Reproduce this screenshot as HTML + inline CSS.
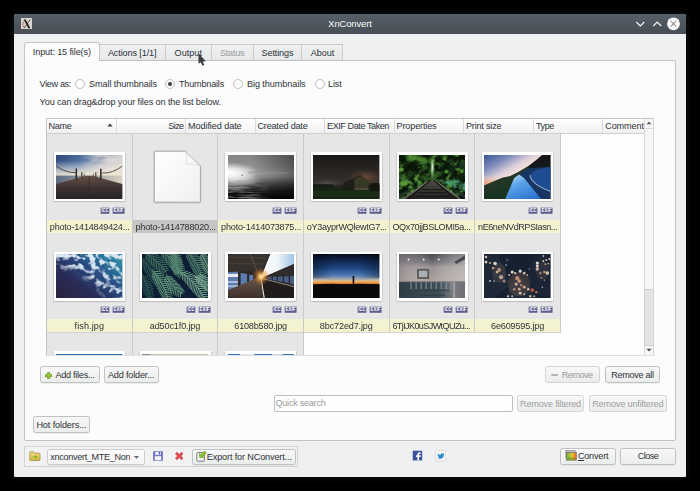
<!DOCTYPE html>
<html><head><meta charset="utf-8"><title>XnConvert</title>
<style>
html,body{margin:0;padding:0;background:#000;}
body{width:700px;height:491px;position:relative;overflow:hidden;font-family:"Liberation Sans",sans-serif;font-size:9.1px;color:#2f3338;letter-spacing:-0.08px;}
div,svg{position:absolute;box-sizing:border-box;}
.abs{position:absolute;}
#glow{left:4px;top:6px;width:692px;height:481px;border-radius:10px;background:#0c0c0c;filter:blur(5px);}
#win{left:14px;top:14px;width:672px;height:463px;background:#eff0f1;border-radius:3px 3px 1px 1px;box-shadow:0 0 7px rgba(70,80,90,0.28);}
#tb{left:14px;top:14px;width:672px;height:20px;border-radius:3px 3px 0 0;background:linear-gradient(#566068,#474e55);}
#ttl{left:14px;top:14px;width:672px;height:20px;line-height:20px;text-align:center;color:#fcfcfc;font-size:9.4px;}
#panel{left:24px;top:60px;width:652px;height:381px;background:#fcfcfc;border:1px solid #c0c2c4;border-radius:0 2px 2px 2px;}
.tab{top:43.6px;height:17.4px;line-height:16.6px;text-align:center;background:linear-gradient(#eff0f1,#e7e8e9);border:1px solid #c8cacc;border-bottom-color:#bfc1c3;border-left:none;white-space:nowrap;}
.tab.first{top:41.6px;height:19.4px;line-height:18.6px;background:#fcfcfc;border:1px solid #c2c4c6;border-bottom:none;border-radius:3px 3px 0 0;}
.tab.dis{color:#9a9c9e;}
.t{white-space:nowrap;line-height:12px;height:12px;}
.rd{width:10px;height:10px;border-radius:50%;border:1px solid #bdbfc1;background:#fcfcfc;}
.rd.on::after{content:"";position:absolute;left:2px;top:2px;width:4px;height:4px;border-radius:50%;background:#3a3e43;}
#tbl{left:46px;top:118px;width:608px;height:237.6px;background:#fdfdfd;border:1px solid #c3c4c6;border-bottom-color:#dfe0e1;border-right-color:#d4d5d6;}
#hdr{left:46.5px;top:119px;width:598px;height:14.5px;background:linear-gradient(#ffffff,#f0f0f0);border-bottom:1px solid #cfcfcf;}
.th{top:119px;height:14px;line-height:14px;border-right:1px solid #dadada;white-space:nowrap;overflow:hidden;}
.th span{padding:0 1.5px 0 2px;}
.cell{background:#e6e6e6;border-right:1px solid #cbcbcb;border-bottom:1px solid #d2d2d2;}
.fr{width:71px;height:48.8px;background:#fff;box-shadow:0 0.5px 1.5px rgba(0,0,0,.45);padding:2.3px;overflow:hidden;}
.fr svg{position:static;display:block;width:66.4px;height:44.2px;}
.bd{height:6.6px;line-height:6.6px;font-size:4.8px;font-weight:bold;color:#fff;background:#5e5e8c;text-align:center;letter-spacing:-0.15px;overflow:hidden;box-shadow:0 0 0 0.6px #f2f2f6;}
.lb{height:13.2px;line-height:13.2px;padding-top:1.1px;background:#f4f3d0;white-space:nowrap;overflow:hidden;padding-left:2.8px;}
.lb.ctr{text-align:center;padding-left:0;}
.lb.sel{background:#c5c5c5;}
.btn{height:17px;line-height:16.6px;text-align:center;border:1px solid #bfc1c3;border-radius:2.5px;background:linear-gradient(#f8f8f8,#ebecec);white-space:nowrap;box-shadow:0 0.5px 0.5px rgba(0,0,0,.12);}
.btn.dis{color:#9c9ea0;border-color:#d3d4d5;box-shadow:none;}
</style></head><body>
<svg width="0" height="0" style="left:0;top:0"><defs><filter id="bl" x="-5%" y="-5%" width="110%" height="110%" color-interpolation-filters="sRGB"><feGaussianBlur stdDeviation="0.45"/></filter></defs></svg>
<div id="win"></div>
<div id="tb"></div>
<div id="ttl">XnConvert</div>
<!-- window icon -->
<svg style="left:20.5px;top:17.6px" width="11.6" height="11.8" viewBox="0 0 11.6 11.8"><rect width="11.6" height="11.8" fill="#d8d6d0"/><path d="M2.6 1.6 L4.6 1.6 L9.4 10.2 L7.4 10.2 Z" fill="#1e1e1e"/><path d="M9.2 1.6 L3 10.2" stroke="#2a2a2a" stroke-width="0.8" fill="none"/><path d="M2.6 3.4 Q0.8 7 3 9.8" stroke="#c8553f" stroke-width="0.8" fill="none"/></svg>
<!-- title buttons -->
<svg style="left:634px;top:16px" width="50" height="16" viewBox="0 0 50 16">
<path d="M2.3 6 L6.3 10 L10.3 6" stroke="#fcfcfc" stroke-width="1.1" fill="none"/>
<path d="M19.2 10 L23.2 6 L27.2 6.0 M23.2 6 L27.2 10" stroke="none" fill="none"/>
<path d="M19.2 10 L23.2 6 L27.2 10" stroke="#fcfcfc" stroke-width="1.1" fill="none"/>
<circle cx="39.5" cy="7.8" r="6.4" fill="#fcfcfc"/>
<path d="M36.7 5 L42.3 10.6 M42.3 5 L36.7 10.6" stroke="#4a5259" stroke-width="0.9" fill="none"/>
</svg>

<div id="panel"></div>
<div class="tab first" style="left:24px;width:75.6px"><span style="letter-spacing:-0.127px">Input: 15 file(s)</span></div>
<div class="tab" style="left:99.6px;width:66.2px"><span style="letter-spacing:-0.111px">Actions [1/1]</span></div>
<div class="tab" style="left:165.8px;width:46px"><span style="letter-spacing:0.015px">Output</span></div>
<div class="tab dis" style="left:211.8px;width:41.8px"><span style="letter-spacing:-0.23px">Status</span></div>
<div class="tab" style="left:253.6px;width:48.8px"><span style="letter-spacing:-0.132px">Settings</span></div>
<div class="tab" style="left:302.4px;width:41px"><span style="letter-spacing:-0.073px">About</span></div>
<!-- cursor -->
<svg style="left:196px;top:50px" width="12" height="18" viewBox="196 50 12 18"><path d="M198.5 53.2 L198.5 63.8 L200.7 62.3 L202.5 65.8 L204.3 64.9 L202.7 61.6 L205.8 61.2 Z" fill="#3a3e42"/></svg>

<div class="t" style="left:39.6px;top:78px"><span style="letter-spacing:-0.352px">View as:</span></div>
<div class="rd" style="left:75px;top:78.6px"></div>
<div class="t" style="left:89px;top:78px"><span style="letter-spacing:-0.078px">Small thumbnails</span></div>
<div class="rd on" style="left:165px;top:78.6px"></div>
<div class="t" style="left:179px;top:78px"><span style="letter-spacing:-0.202px">Thumbnails</span></div>
<div class="rd" style="left:233px;top:78.6px"></div>
<div class="t" style="left:247px;top:78px"><span style="letter-spacing:-0.075px">Big thumbnails</span></div>
<div class="rd" style="left:314.5px;top:78.6px"></div>
<div class="t" style="left:328px;top:78px"><span style="letter-spacing:-0.164px">List</span></div>
<div class="t" style="left:39.6px;top:95.5px"><span style="letter-spacing:-0.103px">You can drag&amp;drop your files on the list below.</span></div>

<div id="tbl"></div>
<div id="hdr"></div>
<div class="th" style="left:46.5px;width:70.0px;"><span style="letter-spacing:-0.316px">Name</span></div><div class="th" style="left:116.5px;width:69.5px;text-align:right;"><span style="letter-spacing:-0.62px">Size</span></div><div class="th" style="left:186px;width:69.5px;"><span style="letter-spacing:-0.078px">Modified date</span></div><div class="th" style="left:255.5px;width:69.5px;"><span style="letter-spacing:-0.215px">Created date</span></div><div class="th" style="left:325px;width:69.5px;"><span style="letter-spacing:-0.439px">EXIF Date Taken</span></div><div class="th" style="left:394.5px;width:69.5px;"><span style="letter-spacing:-0.145px">Properties</span></div><div class="th" style="left:464px;width:70px;"><span style="letter-spacing:-0.201px">Print size</span></div><div class="th" style="left:534px;width:69.20000000000005px;"><span style="letter-spacing:-0.48px">Type</span></div><div class="th" style="left:603.2px;width:42.299999999999955px;"><span style="letter-spacing:-0.117px">Comment</span></div>
<svg style="left:107px;top:123.4px" width="6" height="4" viewBox="0 0 6 4"><path d="M0.4 3.4 L3 0.6 L5.6 3.4 Z" fill="#3a3e43"/></svg>
<div id="grid" style="left:0;top:0;width:700px;height:355px;overflow:hidden;clip-path:inset(133.5px 55.5px 0 46.5px)">
<div style="left:46.5px;top:133.5px;width:514px;height:199.5px;background:#cdcdcd"></div>
<div style="left:46.5px;top:332.5px;width:257px;height:24px;background:#cdcdcd"></div>
<div class="cell" style="left:47.00px;top:133.50px;width:85.65px;height:99.50px"></div><div class="fr" style="left:54.0px;top:152.4px"><svg viewBox="0 0 66 44" preserveAspectRatio="none">
<defs>
<linearGradient id="a1" x1="0" y1="0" x2="1" y2="0.35"><stop offset="0" stop-color="#2b4577"/><stop offset="0.45" stop-color="#5878a6"/><stop offset="0.75" stop-color="#b9bcc4"/><stop offset="1" stop-color="#d8d2c8"/></linearGradient>
<linearGradient id="a2" x1="0" y1="0" x2="0" y2="1"><stop offset="0" stop-color="#fff" stop-opacity="0"/><stop offset="0.75" stop-color="#f1e9d8" stop-opacity="0.75"/><stop offset="1" stop-color="#efe6d2" stop-opacity="0.95"/></linearGradient>
<linearGradient id="a3" x1="0" y1="0" x2="1" y2="0"><stop offset="0" stop-color="#5c6a80"/><stop offset="0.5" stop-color="#9a9ca2"/><stop offset="1" stop-color="#d9d2c0"/></linearGradient>
<filter id="an" x="0" y="0" width="100%" height="100%" color-interpolation-filters="sRGB"><feTurbulence type="fractalNoise" baseFrequency="0.06 0.22" numOctaves="3" seed="3"/><feColorMatrix type="matrix" values="0 0 0 0 0.86  0 0 0 0 0.84  0 0 0 0 0.84  3.4 0 0 0 -1.2"/></filter>
<linearGradient id="a5" gradientUnits="userSpaceOnUse" x1="22" y1="0" x2="50" y2="0"><stop offset="0" stop-color="#000"/><stop offset="1" stop-color="#fff"/></linearGradient>
<linearGradient id="a6" x1="0" y1="0" x2="0" y2="1"><stop offset="0.3" stop-color="#fff"/><stop offset="0.7" stop-color="#000"/></linearGradient>
<mask id="ak"><rect width="66" height="20" fill="url(#a5)"/><rect width="66" height="20" fill="url(#a6)" style="mix-blend-mode:multiply"/></mask>
<linearGradient id="a4" x1="0" y1="0" x2="0" y2="1"><stop offset="0" stop-color="#655249"/><stop offset="0.35" stop-color="#493b37"/><stop offset="1" stop-color="#282325"/></linearGradient>
</defs><g filter="url(#bl)">
<rect width="66" height="21" fill="url(#a1)"/>
<rect y="6" width="66" height="15" fill="url(#a2)"/>
<g mask="url(#ak)"><rect width="66" height="20" filter="url(#an)"/></g>
<rect y="20.5" width="66" height="10" fill="url(#a3)"/>
<path d="M0 29 L30 20.6 H36 L66 29 V44 H0 Z" fill="url(#a4)"/>
<path d="M0 33.5 H66 M0 37 H66 M0 40.5 H66" stroke="#241f22" stroke-width="0.5" opacity="0.7"/>
<path d="M33 21 V44" stroke="#2a2325" stroke-width="0.5"/>
<path d="M0 11 Q10 18 19.6 17.5 M66 11 Q56 18.5 46 18" stroke="#3a3030" stroke-width="0.8" fill="none"/>
<path d="M20.2 13.5 V24.5 M44.6 13.8 V24.2" stroke="#2a2424" stroke-width="1.5"/>
<path d="M25.6 17 V22.6 M39.6 17 V22.4" stroke="#2f2828" stroke-width="1"/>
<path d="M28 18.5 V21.6 M37.2 18.5 V21.6" stroke="#3a3232" stroke-width="0.7"/>
</g></svg></div><svg class="abs" style="left:100.2px;top:206.7px" width="10.0" height="7.4" viewBox="0 0 10.0 7.4"><rect x="0" y="0" width="10.0" height="7.4" fill="#f1f1f5"/><rect x="0.6" y="0.6" width="8.8" height="6.2" fill="#5e5e8c"/><text x="5.0" y="5.5" text-anchor="middle" textLength="7.2" lengthAdjust="spacingAndGlyphs" font-family="Liberation Sans, sans-serif" font-weight="bold" font-size="5" fill="#fff">ICC</text></svg><svg class="abs" style="left:112.2px;top:206.7px" width="13.2" height="7.4" viewBox="0 0 13.2 7.4"><rect x="0" y="0" width="13.2" height="7.4" fill="#f1f1f5"/><rect x="0.6" y="0.6" width="12" height="6.2" fill="#5e5e8c"/><text x="6.6" y="5.5" text-anchor="middle" textLength="10" lengthAdjust="spacingAndGlyphs" font-family="Liberation Sans, sans-serif" font-weight="bold" font-size="5" fill="#fff">EXIF</text></svg><div class="lb" style="left:47.00px;top:219.8px;width:84.65px;letter-spacing:-0.219px">photo-1414849424...</div><div class="cell" style="left:132.65px;top:133.50px;width:85.65px;height:99.50px"></div><svg class="abs" style="left:153.2px;top:150.3px" width="49" height="54" viewBox="0 0 49 54"><defs><linearGradient id="pg" x1="0" y1="0" x2="1" y2="1"><stop offset="0" stop-color="#ffffff"/><stop offset="0.6" stop-color="#f6f6f6"/><stop offset="1" stop-color="#f0f0f0"/></linearGradient><filter id="ps" x="-10%" y="-10%" width="120%" height="125%"><feGaussianBlur stdDeviation="0.9"/></filter></defs><path d="M2 2.4 H32 L47.4 17 V52.6 H1.6 Z" fill="#000" opacity="0.28" filter="url(#ps)"/><path d="M2 1.2 H32 L47.4 16 V51.4 Q47.4 52.2 46.6 52.2 H2 Q1.2 52.2 1.2 51.4 V2 Q1.2 1.2 2 1.2 Z" fill="url(#pg)" stroke="#a6a6a6" stroke-width="1"/><path d="M32.4 1.8 Q35 9 33.4 14.4 Q40 13.4 46.8 15.8 Z" fill="#f7f7f7" stroke="#d2d2d2" stroke-width="0.6"/></svg><div class="lb sel" style="left:132.65px;top:219.8px;width:84.65px;letter-spacing:-0.182px">photo-1414788020...</div><div class="cell" style="left:218.30px;top:133.50px;width:85.65px;height:99.50px"></div><div class="fr" style="left:225.3px;top:152.4px"><svg viewBox="0 0 66 44" preserveAspectRatio="none">
<defs>
<linearGradient id="b1" x1="0" y1="0" x2="0" y2="1"><stop offset="0" stop-color="#828282"/><stop offset="0.25" stop-color="#929292"/><stop offset="0.42" stop-color="#a8a8a8"/><stop offset="0.5" stop-color="#989898"/><stop offset="0.66" stop-color="#4e4e4e"/><stop offset="0.82" stop-color="#1a1a1a"/><stop offset="1" stop-color="#040404"/></linearGradient>
<radialGradient id="b2" cx="0.5" cy="0.5" r="0.5"><stop offset="0" stop-color="#fff" stop-opacity="1"/><stop offset="0.4" stop-color="#fff" stop-opacity="0.75"/><stop offset="1" stop-color="#fff" stop-opacity="0"/></radialGradient>
<linearGradient id="b3" x1="0" y1="0" x2="1" y2="0"><stop offset="0.35" stop-color="#000" stop-opacity="0"/><stop offset="1" stop-color="#000" stop-opacity="0.42"/></linearGradient>
<filter id="bw" x="0" y="0" width="100%" height="100%" color-interpolation-filters="sRGB"><feTurbulence type="fractalNoise" baseFrequency="0.06 0.5" numOctaves="2" seed="8"/><feColorMatrix type="matrix" values="0 0 0 0 0.62  0 0 0 0 0.62  0 0 0 0 0.62  3.2 0 0 0 -1.25"/></filter>
<linearGradient id="b4" gradientUnits="userSpaceOnUse" x1="0" y1="44" x2="40" y2="26"><stop offset="0" stop-color="#fff"/><stop offset="0.55" stop-color="#888"/><stop offset="1" stop-color="#000"/></linearGradient>
<mask id="bk"><rect y="25" width="66" height="19" fill="url(#b4)"/></mask>
</defs><g filter="url(#bl)">
<rect width="66" height="44" fill="url(#b1)"/>
<rect width="66" height="44" fill="url(#b3)"/>
<ellipse cx="2" cy="17.5" rx="28" ry="10" fill="url(#b2)"/>
<ellipse cx="8" cy="25" rx="25" ry="8" fill="url(#b2)" opacity="0.6"/>
<path d="M20 16.8 Q36 14.8 60 17.6 L60 18.8 Q36 17.4 20 18.4 Z" fill="#8e8e8e" opacity="0.5"/>
<g mask="url(#bk)"><rect y="25" width="66" height="19" filter="url(#bw)"/></g>
<path d="M14 18.8 L14.6 20.6 H13.4 Z" fill="#333"/>
</g></svg></div><svg class="abs" style="left:271.5px;top:206.7px" width="10.0" height="7.4" viewBox="0 0 10.0 7.4"><rect x="0" y="0" width="10.0" height="7.4" fill="#f1f1f5"/><rect x="0.6" y="0.6" width="8.8" height="6.2" fill="#5e5e8c"/><text x="5.0" y="5.5" text-anchor="middle" textLength="7.2" lengthAdjust="spacingAndGlyphs" font-family="Liberation Sans, sans-serif" font-weight="bold" font-size="5" fill="#fff">ICC</text></svg><svg class="abs" style="left:283.5px;top:206.7px" width="13.2" height="7.4" viewBox="0 0 13.2 7.4"><rect x="0" y="0" width="13.2" height="7.4" fill="#f1f1f5"/><rect x="0.6" y="0.6" width="12" height="6.2" fill="#5e5e8c"/><text x="6.6" y="5.5" text-anchor="middle" textLength="10" lengthAdjust="spacingAndGlyphs" font-family="Liberation Sans, sans-serif" font-weight="bold" font-size="5" fill="#fff">EXIF</text></svg><div class="lb" style="left:218.30px;top:219.8px;width:84.65px;letter-spacing:-0.208px">photo-1414073875...</div><div class="cell" style="left:303.95px;top:133.50px;width:85.65px;height:99.50px"></div><div class="fr" style="left:311.0px;top:152.4px"><svg viewBox="0 0 66 44" preserveAspectRatio="none">
<defs>
<linearGradient id="c1" x1="0" y1="0" x2="0" y2="1"><stop offset="0" stop-color="#1b1917"/><stop offset="0.4" stop-color="#2a2724"/><stop offset="0.66" stop-color="#36322e"/><stop offset="0.7" stop-color="#161b13"/><stop offset="1" stop-color="#162212"/></linearGradient>
<radialGradient id="c2" cx="0.5" cy="0.5" r="0.5"><stop offset="0" stop-color="#7a4e38" stop-opacity="0.8"/><stop offset="1" stop-color="#6b4634" stop-opacity="0"/></radialGradient>
<radialGradient id="c3" cx="0.5" cy="0.5" r="0.5"><stop offset="0" stop-color="#5e5c58" stop-opacity="0.7"/><stop offset="1" stop-color="#5a5852" stop-opacity="0"/></radialGradient>
</defs><g filter="url(#bl)">
<rect width="66" height="44" fill="url(#c1)"/>
<ellipse cx="52" cy="22" rx="18" ry="8" fill="url(#c2)"/>
<ellipse cx="14" cy="29" rx="16" ry="6" fill="url(#c3)"/>
<path d="M0 30 L22 31 L30 31.5 L66 30 V44 H0 Z" fill="#172314"/>
<path d="M0 35.5 H66 V41.5 H0 Z" fill="#1f3319" opacity="0.7"/>
<path d="M30 32.5 L31 27 L41 23 L47 20 L55 27 L55.5 35 L41 35 Z" fill="#1f1e18"/>
<path d="M41 24.4 L47 20.6 L55 27 L55.5 34.6 L41 34.6 Z" fill="#373826"/>
<path d="M41.6 33 H55 V35 H41.6 Z" fill="#565640" opacity="0.7"/>
<path d="M57 28 H66 V36 H57 Z" fill="#14170f"/>
<path d="M22 29.6 h7 v2.6 h-7 Z" fill="#33242a"/>
<path d="M0 29.2 H20 V31 H0 Z" fill="#15160f"/>
</g></svg></div><svg class="abs" style="left:357.1px;top:206.7px" width="10.0" height="7.4" viewBox="0 0 10.0 7.4"><rect x="0" y="0" width="10.0" height="7.4" fill="#f1f1f5"/><rect x="0.6" y="0.6" width="8.8" height="6.2" fill="#5e5e8c"/><text x="5.0" y="5.5" text-anchor="middle" textLength="7.2" lengthAdjust="spacingAndGlyphs" font-family="Liberation Sans, sans-serif" font-weight="bold" font-size="5" fill="#fff">ICC</text></svg><svg class="abs" style="left:369.1px;top:206.7px" width="13.2" height="7.4" viewBox="0 0 13.2 7.4"><rect x="0" y="0" width="13.2" height="7.4" fill="#f1f1f5"/><rect x="0.6" y="0.6" width="12" height="6.2" fill="#5e5e8c"/><text x="6.6" y="5.5" text-anchor="middle" textLength="10" lengthAdjust="spacingAndGlyphs" font-family="Liberation Sans, sans-serif" font-weight="bold" font-size="5" fill="#fff">EXIF</text></svg><div class="lb" style="left:303.95px;top:219.8px;width:84.65px;letter-spacing:-0.312px">oY3ayprWQlewtG7...</div><div class="cell" style="left:389.60px;top:133.50px;width:85.65px;height:99.50px"></div><div class="fr" style="left:396.6px;top:152.4px"><svg viewBox="0 0 66 44" preserveAspectRatio="none">
<defs>
<filter id="dn" x="0" y="0" width="100%" height="100%" color-interpolation-filters="sRGB"><feTurbulence type="fractalNoise" baseFrequency="0.10 0.12" numOctaves="3" seed="11"/><feColorMatrix type="matrix" values="0 0 0 0 0.04  0 0 0 0 0.09  0 0 0 0 0.03  4.5 0 0 0 -1.65"/><feGaussianBlur stdDeviation="0.4"/></filter>
<filter id="dl" x="0" y="0" width="100%" height="100%" color-interpolation-filters="sRGB"><feTurbulence type="fractalNoise" baseFrequency="0.13 0.15" numOctaves="3" seed="4"/><feColorMatrix type="matrix" values="0 0 0 0 0.34  0 0 0 0 0.58  0 0 0 0 0.2  0 4.5 0 0 -2.5"/><feGaussianBlur stdDeviation="0.4"/></filter>
<filter id="db" x="-30%" y="-30%" width="160%" height="160%"><feGaussianBlur stdDeviation="1.6"/></filter>
<radialGradient id="d2" cx="0.5" cy="0.5" r="0.5"><stop offset="0" stop-color="#e2f4de"/><stop offset="0.5" stop-color="#a4d490" stop-opacity="0.7"/><stop offset="1" stop-color="#6fae58" stop-opacity="0"/></radialGradient>
<linearGradient id="d3" x1="0" y1="0" x2="0" y2="1"><stop offset="0" stop-color="#4c4a44"/><stop offset="1" stop-color="#222120"/></linearGradient>
</defs>
<rect width="66" height="44" fill="#315c27"/>
<g filter="url(#db)">
<path d="M-4 26 L28 25 L8 36 L-4 40 Z" fill="#5aa644"/>
<path d="M70 25 L38 25 L58 36 L70 40 Z" fill="#4a9a70"/>
<ellipse cx="9" cy="15" rx="12" ry="8" fill="#14280f" opacity="0.7"/>
<ellipse cx="54" cy="14" rx="14" ry="10" fill="#122616" opacity="0.8"/>
<ellipse cx="20" cy="4" rx="12" ry="4" fill="#4a8a2c" opacity="0.8"/>
</g>
<rect width="66" height="44" filter="url(#dn)"/>
<rect width="66" height="44" filter="url(#dl)"/>
<ellipse cx="33.2" cy="12" rx="2.4" ry="12" fill="url(#d2)"/>
<path d="M0 39 L20 29.6 L0 44 Z" fill="#26352a" opacity="0.8"/>
<path d="M66 39 L48 30.6 L66 44 Z" fill="#22352c" opacity="0.8"/>
<path d="M29.5 25.5 H36.5 L62 44 H3 Z" fill="url(#d3)"/>
<path d="M29.8 25.5 L4 44 M36.2 25.5 L61 44" stroke="#7c776e" stroke-width="1.1"/>
<path d="M31 25.5 L9 44 M35 25.5 L56 44" stroke="#161514" stroke-width="1.3"/>
<path d="M14 41 H51 M19 37.5 H46 M23 34.5 H43" stroke="#121212" stroke-width="0.9"/>
</svg></div><svg class="abs" style="left:442.8px;top:206.7px" width="10.0" height="7.4" viewBox="0 0 10.0 7.4"><rect x="0" y="0" width="10.0" height="7.4" fill="#f1f1f5"/><rect x="0.6" y="0.6" width="8.8" height="6.2" fill="#5e5e8c"/><text x="5.0" y="5.5" text-anchor="middle" textLength="7.2" lengthAdjust="spacingAndGlyphs" font-family="Liberation Sans, sans-serif" font-weight="bold" font-size="5" fill="#fff">ICC</text></svg><svg class="abs" style="left:454.8px;top:206.7px" width="13.2" height="7.4" viewBox="0 0 13.2 7.4"><rect x="0" y="0" width="13.2" height="7.4" fill="#f1f1f5"/><rect x="0.6" y="0.6" width="12" height="6.2" fill="#5e5e8c"/><text x="6.6" y="5.5" text-anchor="middle" textLength="10" lengthAdjust="spacingAndGlyphs" font-family="Liberation Sans, sans-serif" font-weight="bold" font-size="5" fill="#fff">EXIF</text></svg><div class="lb" style="left:389.60px;top:219.8px;width:84.65px;letter-spacing:-0.385px">OQx70jjBSLOMI5a...</div><div class="cell" style="left:475.25px;top:133.50px;width:85.65px;height:99.50px"></div><div class="fr" style="left:482.2px;top:152.4px"><svg viewBox="0 0 66 44" preserveAspectRatio="none">
<defs>
<linearGradient id="e1" gradientUnits="userSpaceOnUse" x1="8" y1="-4" x2="30" y2="34"><stop offset="0" stop-color="#3c5896"/><stop offset="0.3" stop-color="#7f8cbc"/><stop offset="0.55" stop-color="#dccfda"/><stop offset="0.72" stop-color="#f6e2d8"/><stop offset="0.88" stop-color="#f0b79c"/><stop offset="1" stop-color="#e4906e"/></linearGradient>
<radialGradient id="e4" cx="0.5" cy="0.5" r="0.5"><stop offset="0" stop-color="#ee9a78" stop-opacity="0.95"/><stop offset="0.5" stop-color="#f0b090" stop-opacity="0.6"/><stop offset="1" stop-color="#f4d0c0" stop-opacity="0"/></radialGradient>
<linearGradient id="e2" x1="0.2" y1="0" x2="0.8" y2="1"><stop offset="0" stop-color="#b8d8f4"/><stop offset="0.35" stop-color="#5aa4ea"/><stop offset="1" stop-color="#2a70cc"/></linearGradient>
<linearGradient id="e3" x1="0" y1="0" x2="0.3" y2="1"><stop offset="0" stop-color="#54483c"/><stop offset="0.35" stop-color="#2c3a2a"/><stop offset="1" stop-color="#173222"/></linearGradient>
</defs><g filter="url(#bl)">
<rect width="66" height="44" fill="url(#e1)"/>
<ellipse cx="2" cy="29" rx="22" ry="9" fill="url(#e4)"/>
<path d="M0 30.4 L8 27 L18 22.6 L26 21 L34 17 L44 11 L52 5 L58 0 H66 V44 H0 Z" fill="url(#e3)"/>
<path d="M30 23 L35 19.4 L40 23 L58 44 H21 Z" fill="url(#e2)"/>
<path d="M35 19 L46 12 L66 11 V44 H57 L40 23 Z" fill="#173560"/>
<path d="M46 19 Q50 14 66 12 V37 Q48 30 46 19 Z" fill="#1d4c90"/>
<path d="M45.5 20 Q48 30 66 36" stroke="#9bb0cc" stroke-width="1" fill="none"/>
<path d="M43 12.6 L58 0 H66 V11.4 L50 13 Z" fill="#14171a"/>
</g></svg></div><svg class="abs" style="left:528.4px;top:206.7px" width="10.0" height="7.4" viewBox="0 0 10.0 7.4"><rect x="0" y="0" width="10.0" height="7.4" fill="#f1f1f5"/><rect x="0.6" y="0.6" width="8.8" height="6.2" fill="#5e5e8c"/><text x="5.0" y="5.5" text-anchor="middle" textLength="7.2" lengthAdjust="spacingAndGlyphs" font-family="Liberation Sans, sans-serif" font-weight="bold" font-size="5" fill="#fff">ICC</text></svg><svg class="abs" style="left:540.4px;top:206.7px" width="13.2" height="7.4" viewBox="0 0 13.2 7.4"><rect x="0" y="0" width="13.2" height="7.4" fill="#f1f1f5"/><rect x="0.6" y="0.6" width="12" height="6.2" fill="#5e5e8c"/><text x="6.6" y="5.5" text-anchor="middle" textLength="10" lengthAdjust="spacingAndGlyphs" font-family="Liberation Sans, sans-serif" font-weight="bold" font-size="5" fill="#fff">EXIF</text></svg><div class="lb" style="left:475.25px;top:219.8px;width:84.65px;letter-spacing:-0.47px">nE6neNVdRPSIasn...</div><div class="cell" style="left:47.00px;top:233.00px;width:85.65px;height:99.50px"></div><div class="fr" style="left:54.0px;top:251.9px"><svg viewBox="0 0 66 44" preserveAspectRatio="none">
<defs>
<linearGradient id="f1" x1="0" y1="1" x2="1" y2="0.1"><stop offset="0" stop-color="#2c2240"/><stop offset="0.35" stop-color="#292c58"/><stop offset="0.62" stop-color="#284a82"/><stop offset="0.85" stop-color="#2a789e"/><stop offset="1" stop-color="#3890ac"/></linearGradient>
<filter id="fn" x="0" y="0" width="100%" height="100%" color-interpolation-filters="sRGB"><feTurbulence type="fractalNoise" baseFrequency="0.15 0.18" numOctaves="2" seed="5"/><feColorMatrix type="matrix" values="0 0 0 0 0.86  0 0 0 0 0.91  0 0 0 0 0.95  5 0 0 0 -2.35"/><feGaussianBlur stdDeviation="0.5"/></filter>
<linearGradient id="fm1" x1="0" y1="0" x2="0" y2="1"><stop offset="0" stop-color="#fff"/><stop offset="0.22" stop-color="#fff"/><stop offset="0.42" stop-color="#000"/></linearGradient>
<linearGradient id="fm2" gradientUnits="userSpaceOnUse" x1="30" y1="30" x2="46" y2="12"><stop offset="0" stop-color="#000"/><stop offset="0.4" stop-color="#fff"/><stop offset="1" stop-color="#fff"/></linearGradient>
<mask id="fk1"><rect width="66" height="44" fill="url(#fm1)"/></mask>
<mask id="fk2"><rect width="66" height="44" fill="url(#fm2)"/></mask>
</defs>
<rect width="66" height="44" fill="url(#f1)"/>
<g mask="url(#fk1)"><rect width="66" height="44" filter="url(#fn)"/></g>
<g mask="url(#fk2)"><rect width="66" height="44" filter="url(#fn)" opacity="0.9"/></g>
</svg></div><svg class="abs" style="left:100.2px;top:306.2px" width="10.0" height="7.4" viewBox="0 0 10.0 7.4"><rect x="0" y="0" width="10.0" height="7.4" fill="#f1f1f5"/><rect x="0.6" y="0.6" width="8.8" height="6.2" fill="#5e5e8c"/><text x="5.0" y="5.5" text-anchor="middle" textLength="7.2" lengthAdjust="spacingAndGlyphs" font-family="Liberation Sans, sans-serif" font-weight="bold" font-size="5" fill="#fff">ICC</text></svg><svg class="abs" style="left:112.2px;top:306.2px" width="13.2" height="7.4" viewBox="0 0 13.2 7.4"><rect x="0" y="0" width="13.2" height="7.4" fill="#f1f1f5"/><rect x="0.6" y="0.6" width="12" height="6.2" fill="#5e5e8c"/><text x="6.6" y="5.5" text-anchor="middle" textLength="10" lengthAdjust="spacingAndGlyphs" font-family="Liberation Sans, sans-serif" font-weight="bold" font-size="5" fill="#fff">EXIF</text></svg><div class="lb ctr" style="left:47.00px;top:319.3px;width:84.65px;letter-spacing:0.096px">fish.jpg</div><div class="cell" style="left:132.65px;top:233.00px;width:85.65px;height:99.50px"></div><div class="fr" style="left:139.7px;top:251.9px"><svg viewBox="0 0 66 44" preserveAspectRatio="none"><g filter="url(#bl)"><rect width="66" height="44" fill="#0e1e36"/><path d="M-2.0 4.0 Q10.3 14.7 16.0 30.0 M-0.1 5.7 L-0.7 10.9 M-0.1 5.7 L5.0 4.8 M1.6 7.4 L0.8 13.2 M1.6 7.4 L7.5 6.6 M3.3 9.2 L2.1 15.5 M3.3 9.2 L9.7 8.6 M4.9 11.0 L3.4 17.6 M4.9 11.0 L11.7 10.6 M6.5 12.9 L4.7 19.6 M6.5 12.9 L13.4 12.8 M7.9 14.9 L5.9 21.5 M7.9 14.9 L14.9 15.0 M9.3 16.9 L7.0 23.3 M9.3 16.9 L16.2 17.3 M10.6 18.9 L8.2 25.0 M10.6 18.9 L17.2 19.6 M11.9 21.0 L9.4 26.6 M11.9 21.0 L17.9 21.9 M13.0 23.2 L10.6 28.1 M13.0 23.2 L18.4 24.1 M14.1 25.4 L11.8 29.6 M14.1 25.4 L18.8 26.4 M15.1 27.7 L13.0 31.1 M15.1 27.7 L19.0 28.7" stroke="#2f5a52" stroke-width="1.0" stroke-linecap="round" fill="none" opacity="1.0"/><path d="M2.0 -2.0 Q15.0 5.8 24.0 18.0 M4.0 -0.8 L4.4 4.5 M4.0 -0.8 L8.9 -2.6 M5.9 0.5 L6.2 6.4 M5.9 0.5 L11.5 -1.4 M7.8 1.8 L7.9 8.2 M7.8 1.8 L13.9 -0.0 M9.6 3.2 L9.5 10.0 M9.6 3.2 L16.1 1.4 M11.4 4.6 L11.1 11.6 M11.4 4.6 L18.2 3.0 M13.2 6.1 L12.6 13.1 M13.2 6.1 L20.0 4.7 M14.8 7.7 L14.1 14.5 M14.8 7.7 L21.6 6.5 M16.5 9.3 L15.6 15.7 M16.5 9.3 L23.0 8.3 M18.1 10.9 L17.0 16.9 M18.1 10.9 L24.2 10.2 M19.6 12.6 L18.5 18.0 M19.6 12.6 L25.1 12.1 M21.1 14.3 L20.0 19.0 M21.1 14.3 L25.9 14.1 M22.6 16.1 L21.5 20.0 M22.6 16.1 L26.6 16.1" stroke="#3f6e5e" stroke-width="1.0" stroke-linecap="round" fill="none" opacity="1.0"/><path d="M18.0 -4.0 Q32.8 5.8 40.0 22.0 M19.8 -2.8 L20.0 3.1 M19.8 -2.8 L25.4 -4.5 M21.6 -1.5 L21.5 5.0 M21.6 -1.5 L27.8 -3.2 M23.3 -0.1 L23.0 6.9 M23.3 -0.1 L30.1 -1.8 M24.9 1.3 L24.3 8.7 M24.9 1.3 L32.2 -0.2 M26.5 2.7 L25.6 10.4 M26.5 2.7 L34.2 1.4 M28.0 4.2 L26.8 12.1 M28.0 4.2 L35.9 3.2 M29.5 5.8 L28.0 13.6 M29.5 5.8 L37.5 5.0 M30.9 7.4 L29.1 15.1 M30.9 7.4 L38.8 6.9 M32.3 9.0 L30.2 16.5 M32.3 9.0 L40.0 8.9 M33.5 10.7 L31.4 17.8 M33.5 10.7 L41.0 10.8 M34.8 12.5 L32.5 19.1 M34.8 12.5 L41.8 12.8 M35.9 14.3 L33.6 20.3 M35.9 14.3 L42.4 14.9 M37.0 16.1 L34.7 21.5 M37.0 16.1 L42.9 16.9 M38.1 18.0 L35.9 22.7 M38.1 18.0 L43.2 18.9 M39.1 20.0 L37.1 23.9 M39.1 20.0 L43.4 20.8" stroke="#4c7e68" stroke-width="1.0" stroke-linecap="round" fill="none" opacity="1.0"/><path d="M30.0 -6.0 Q34.9 6.6 36.0 20.0 M30.7 -4.1 L27.9 0.3 M30.7 -4.1 L35.8 -2.6 M31.4 -2.1 L28.1 2.8 M31.4 -2.1 L37.0 -0.3 M32.1 -0.2 L28.4 5.0 M32.1 -0.2 L38.1 2.0 M32.7 1.8 L28.6 7.2 M32.7 1.8 L39.0 4.2 M33.2 3.8 L28.9 9.3 M33.2 3.8 L39.7 6.4 M33.7 5.8 L29.3 11.2 M33.7 5.8 L40.2 8.5 M34.2 7.8 L29.7 13.0 M34.2 7.8 L40.4 10.6 M34.6 9.8 L30.2 14.6 M34.6 9.8 L40.5 12.6 M35.0 11.8 L30.8 16.2 M35.0 11.8 L40.4 14.6 M35.3 13.8 L31.4 17.8 M35.3 13.8 L40.1 16.5 M35.6 15.9 L32.1 19.2 M35.6 15.9 L39.8 18.3 M35.8 17.9 L32.9 20.7 M35.8 17.9 L39.3 20.0" stroke="#5a8c74" stroke-width="1.0" stroke-linecap="round" fill="none" opacity="1.0"/><path d="M44.0 -4.0 Q55.5 8.0 60.0 24.0 M45.5 -2.4 L44.3 3.4 M45.5 -2.4 L51.4 -2.9 M46.9 -0.7 L45.5 5.7 M46.9 -0.7 L53.5 -1.1 M48.3 1.0 L46.5 7.8 M48.3 1.0 L55.4 0.8 M49.6 2.7 L47.5 9.9 M49.6 2.7 L57.2 2.8 M50.9 4.5 L48.4 11.9 M50.9 4.5 L58.7 4.8 M52.1 6.2 L49.3 13.7 M52.1 6.2 L60.0 6.8 M53.2 8.1 L50.1 15.5 M53.2 8.1 L61.1 8.9 M54.3 9.9 L51.0 17.1 M54.3 9.9 L62.0 11.0 M55.3 11.8 L51.9 18.6 M55.3 11.8 L62.7 13.2 M56.2 13.8 L52.8 20.1 M56.2 13.8 L63.2 15.3 M57.1 15.8 L53.8 21.5 M57.1 15.8 L63.5 17.3 M57.9 17.8 L54.8 22.9 M57.9 17.8 L63.7 19.4 M58.7 19.8 L55.8 24.2 M58.7 19.8 L63.7 21.4 M59.4 21.9 L56.8 25.5 M59.4 21.9 L63.6 23.4" stroke="#4f806a" stroke-width="1.0" stroke-linecap="round" fill="none" opacity="1.0"/><path d="M58.0 -2.0 Q64.8 8.2 68.0 20.0 M59.2 -0.1 L57.6 4.2 M59.2 -0.1 L63.8 0.2 M60.4 1.8 L58.3 6.6 M60.4 1.8 L65.5 2.3 M61.4 3.7 L59.1 8.8 M61.4 3.7 L67.1 4.5 M62.5 5.6 L59.9 10.9 M62.5 5.6 L68.3 6.6 M63.4 7.6 L60.6 12.9 M63.4 7.6 L69.3 8.8 M64.4 9.6 L61.5 14.7 M64.4 9.6 L70.1 10.9 M65.2 11.6 L62.3 16.3 M65.2 11.6 L70.5 13.0 M66.0 13.7 L63.3 17.9 M66.0 13.7 L70.8 15.1 M66.7 15.8 L64.2 19.3 M66.7 15.8 L70.8 17.1 M67.4 17.9 L65.3 20.7 M67.4 17.9 L70.7 19.1" stroke="#6a9a82" stroke-width="1.0" stroke-linecap="round" fill="none" opacity="1.0"/><path d="M10.0 16.0 Q22.4 28.6 26.0 46.0 M11.6 17.7 L10.5 23.5 M11.6 17.7 L17.5 17.1 M13.2 19.5 L11.7 25.8 M13.2 19.5 L19.7 19.1 M14.6 21.2 L12.8 28.1 M14.6 21.2 L21.7 21.1 M16.0 23.1 L13.8 30.3 M16.0 23.1 L23.5 23.2 M17.3 25.0 L14.7 32.3 M17.3 25.0 L25.1 25.4 M18.5 26.9 L15.6 34.3 M18.5 26.9 L26.5 27.6 M19.7 28.8 L16.4 36.1 M19.7 28.8 L27.6 29.9 M20.7 30.8 L17.3 37.9 M20.7 30.8 L28.5 32.2 M21.7 32.9 L18.1 39.5 M21.7 32.9 L29.1 34.5 M22.6 35.0 L19.0 41.1 M22.6 35.0 L29.6 36.7 M23.5 37.1 L19.9 42.6 M23.5 37.1 L29.8 39.0 M24.2 39.2 L20.8 44.1 M24.2 39.2 L29.9 41.2 M24.9 41.5 L21.7 45.6 M24.9 41.5 L29.8 43.3 M25.5 43.7 L22.7 47.2 M25.5 43.7 L29.6 45.5" stroke="#5e9278" stroke-width="1.0" stroke-linecap="round" fill="none" opacity="1.0"/><path d="M24.0 20.0 Q28.9 32.5 40.0 40.0 M24.8 21.9 L22.2 26.5 M24.8 21.9 L29.9 23.1 M25.6 23.7 L23.0 29.0 M25.6 23.7 L31.4 24.8 M26.6 25.5 L24.0 31.3 M26.6 25.5 L32.9 26.4 M27.6 27.2 L25.1 33.5 M27.6 27.2 L34.3 27.8 M28.7 28.9 L26.5 35.5 M28.7 28.9 L35.6 29.2 M29.8 30.5 L27.9 37.2 M29.8 30.5 L36.8 30.4 M31.1 32.0 L29.5 38.7 M31.1 32.0 L37.9 31.6 M32.4 33.5 L31.2 39.9 M32.4 33.5 L38.9 32.8 M33.7 34.9 L32.9 41.0 M33.7 34.9 L39.8 34.0 M35.2 36.3 L34.7 41.8 M35.2 36.3 L40.6 35.2 M36.7 37.6 L36.5 42.4 M36.7 37.6 L41.4 36.4 M38.3 38.8 L38.3 42.8 M38.3 38.8 L42.2 37.7" stroke="#5a8c74" stroke-width="1.0" stroke-linecap="round" fill="none" opacity="1.0"/><path d="M38.0 18.0 Q53.7 27.6 62.0 44.0 M39.9 19.2 L40.3 25.1 M39.9 19.2 L45.4 17.3 M41.8 20.5 L42.0 27.0 M41.8 20.5 L48.0 18.5 M43.6 21.8 L43.6 28.8 M43.6 21.8 L50.4 19.9 M45.4 23.2 L45.1 30.7 M45.4 23.2 L52.6 21.4 M47.1 24.7 L46.5 32.4 M47.1 24.7 L54.7 23.1 M48.7 26.2 L47.8 34.0 M48.7 26.2 L56.5 24.8 M50.3 27.7 L49.1 35.6 M50.3 27.7 L58.2 26.6 M51.8 29.3 L50.4 37.1 M51.8 29.3 L59.7 28.5 M53.3 31.0 L51.6 38.5 M53.3 31.0 L61.0 30.4 M54.7 32.7 L52.9 39.9 M54.7 32.7 L62.2 32.4 M56.1 34.4 L54.1 41.1 M56.1 34.4 L63.1 34.4 M57.4 36.2 L55.3 42.4 M57.4 36.2 L63.8 36.5 M58.6 38.1 L56.6 43.6 M58.6 38.1 L64.5 38.5 M59.8 40.0 L57.8 44.8 M59.8 40.0 L64.9 40.6 M60.9 42.0 L59.1 46.0 M60.9 42.0 L65.3 42.6" stroke="#6c9c84" stroke-width="1.0" stroke-linecap="round" fill="none" opacity="1.0"/><path d="M52.0 22.0 Q62.8 26.6 70.0 36.0 M53.8 22.8 L54.8 28.0 M53.8 22.8 L58.5 20.3 M55.5 23.7 L56.4 29.6 M55.5 23.7 L60.9 21.1 M57.2 24.6 L57.9 31.1 M57.2 24.6 L63.2 22.1 M58.8 25.6 L59.3 32.4 M58.8 25.6 L65.2 23.2 M60.4 26.7 L60.6 33.7 M60.4 26.7 L67.1 24.5 M61.9 27.8 L61.8 34.8 M61.9 27.8 L68.6 26.0 M63.4 29.0 L63.0 35.7 M63.4 29.0 L69.9 27.5 M64.8 30.3 L64.2 36.5 M64.8 30.3 L71.0 29.2 M66.2 31.6 L65.4 37.2 M66.2 31.6 L71.8 30.8 M67.5 33.0 L66.6 37.8 M67.5 33.0 L72.4 32.6 M68.8 34.5 L67.8 38.4 M68.8 34.5 L72.9 34.3" stroke="#7aa890" stroke-width="1.0" stroke-linecap="round" fill="none" opacity="1.0"/><path d="M0.0 20.0 Q5.9 31.4 8.0 44.0 M1.0 22.1 L-1.1 26.2 M1.0 22.1 L5.6 23.0 M2.0 24.2 L-0.5 28.7 M2.0 24.2 L7.1 25.3 M2.9 26.3 L0.0 31.2 M2.9 26.3 L8.4 27.7 M3.8 28.4 L0.6 33.5 M3.8 28.4 L9.5 30.1 M4.6 30.6 L1.2 35.6 M4.6 30.6 L10.3 32.4 M5.3 32.8 L1.9 37.5 M5.3 32.8 L10.8 34.7 M6.0 35.0 L2.6 39.4 M6.0 35.0 L11.1 37.0 M6.6 37.2 L3.4 41.1 M6.6 37.2 L11.2 39.1 M7.1 39.4 L4.3 42.8 M7.1 39.4 L11.1 41.2 M7.6 41.7 L5.2 44.4 M7.6 41.7 L10.8 43.3" stroke="#2c564e" stroke-width="1.0" stroke-linecap="round" fill="none" opacity="1.0"/></g></svg></div><svg class="abs" style="left:185.9px;top:306.2px" width="10.0" height="7.4" viewBox="0 0 10.0 7.4"><rect x="0" y="0" width="10.0" height="7.4" fill="#f1f1f5"/><rect x="0.6" y="0.6" width="8.8" height="6.2" fill="#5e5e8c"/><text x="5.0" y="5.5" text-anchor="middle" textLength="7.2" lengthAdjust="spacingAndGlyphs" font-family="Liberation Sans, sans-serif" font-weight="bold" font-size="5" fill="#fff">ICC</text></svg><svg class="abs" style="left:197.9px;top:306.2px" width="13.2" height="7.4" viewBox="0 0 13.2 7.4"><rect x="0" y="0" width="13.2" height="7.4" fill="#f1f1f5"/><rect x="0.6" y="0.6" width="12" height="6.2" fill="#5e5e8c"/><text x="6.6" y="5.5" text-anchor="middle" textLength="10" lengthAdjust="spacingAndGlyphs" font-family="Liberation Sans, sans-serif" font-weight="bold" font-size="5" fill="#fff">EXIF</text></svg><div class="lb ctr" style="left:132.65px;top:319.3px;width:84.65px;letter-spacing:-0.133px">ad50c1f0.jpg</div><div class="cell" style="left:218.30px;top:233.00px;width:85.65px;height:99.50px"></div><div class="fr" style="left:225.3px;top:251.9px"><svg viewBox="0 0 66 44" preserveAspectRatio="none">
<defs>
<linearGradient id="g1" x1="0" y1="0" x2="1" y2="0"><stop offset="0" stop-color="#ffffff"/><stop offset="0.5" stop-color="#eef4f8"/><stop offset="1" stop-color="#9ec4e4"/></linearGradient>
<radialGradient id="g2" cx="0.5" cy="0.5" r="0.5"><stop offset="0" stop-color="#fff6e0"/><stop offset="0.25" stop-color="#ffc46a" stop-opacity="0.9"/><stop offset="0.6" stop-color="#e08a30" stop-opacity="0.4"/><stop offset="1" stop-color="#c06a20" stop-opacity="0"/></radialGradient>
<linearGradient id="g3" x1="0" y1="0" x2="0" y2="1"><stop offset="0" stop-color="#6a564a"/><stop offset="1" stop-color="#3c302c"/></linearGradient>
</defs><g filter="url(#bl)">
<rect width="66" height="44" fill="#2a2624"/>
<path d="M42 0 H66 V10 L36 23 L33 23 Z" fill="url(#g1)"/>
<path d="M0 0 H42 L33 19 L30 22 L22 17 L10 18 L0 20 Z" fill="#36312c"/>
<path d="M0 3 L38 4 M0 9 L35 10" stroke="#4a443c" stroke-width="1.5" opacity="0.7"/>
<path d="M0 18 L10 17.6 V36 H0 Z M12.5 19 L19 19.6 V32 L12.5 34 Z M21 20.6 L25 21 V29 L21 30.4 Z" fill="#5c7cae"/>
<path d="M0 20 L10 19.6 V23 H0 Z" fill="#e8ecf2"/>
<path d="M0 27 H10 V29 H0 Z M0 31 H10 V33 H0 Z" fill="#a9bcd8"/>
<path d="M0 36 L31 23 L33 23 L35 44 H0 Z" fill="url(#g3)"/>
<path d="M33 23 L34.5 23 L66 34 V44 H35.6 Z" fill="#1f1c1b"/>
<path d="M36 22.6 L66 9.6 V31 L36 24 Z" fill="#2e2b2a"/>
<path d="M40 23 L66 22 V30 L40 25 Z" fill="#4d6a9a" opacity="0.8"/>
<path d="M44 22 V26 M49 21.6 V27 M55 21 V28 M61 20.6 V29.4" stroke="#23242a" stroke-width="1.2"/>
<path d="M36 25 L66 32.6" stroke="#8a8480" stroke-width="1"/>
<path d="M32.4 23 L35.4 44 H36.6 L33.2 23 Z" fill="#ece4d8"/>
<path d="M22 0 L30.5 21" stroke="#6a625a" stroke-width="0.7"/>
<circle cx="33" cy="22.5" r="9" fill="url(#g2)"/>
</g></svg></div><svg class="abs" style="left:271.5px;top:306.2px" width="10.0" height="7.4" viewBox="0 0 10.0 7.4"><rect x="0" y="0" width="10.0" height="7.4" fill="#f1f1f5"/><rect x="0.6" y="0.6" width="8.8" height="6.2" fill="#5e5e8c"/><text x="5.0" y="5.5" text-anchor="middle" textLength="7.2" lengthAdjust="spacingAndGlyphs" font-family="Liberation Sans, sans-serif" font-weight="bold" font-size="5" fill="#fff">ICC</text></svg><svg class="abs" style="left:283.5px;top:306.2px" width="13.2" height="7.4" viewBox="0 0 13.2 7.4"><rect x="0" y="0" width="13.2" height="7.4" fill="#f1f1f5"/><rect x="0.6" y="0.6" width="12" height="6.2" fill="#5e5e8c"/><text x="6.6" y="5.5" text-anchor="middle" textLength="10" lengthAdjust="spacingAndGlyphs" font-family="Liberation Sans, sans-serif" font-weight="bold" font-size="5" fill="#fff">EXIF</text></svg><div class="lb ctr" style="left:218.30px;top:319.3px;width:84.65px;letter-spacing:-0.21px">6108b580.jpg</div><div class="cell" style="left:303.95px;top:233.00px;width:85.65px;height:99.50px"></div><div class="fr" style="left:311.0px;top:251.9px"><svg viewBox="0 0 66 44" preserveAspectRatio="none">
<defs>
<linearGradient id="h1" x1="0" y1="0" x2="0" y2="1"><stop offset="0" stop-color="#080d1a"/><stop offset="0.12" stop-color="#0e2246"/><stop offset="0.32" stop-color="#1e4684"/><stop offset="0.47" stop-color="#4674b0"/><stop offset="0.55" stop-color="#8a9cb4"/><stop offset="0.6" stop-color="#d4b692"/><stop offset="0.64" stop-color="#efa548"/><stop offset="0.672" stop-color="#e27c22"/><stop offset="0.695" stop-color="#2e1c0e"/><stop offset="0.73" stop-color="#0b0907"/><stop offset="1" stop-color="#050403"/></linearGradient>
<linearGradient id="h2" x1="0" y1="0" x2="1" y2="0"><stop offset="0" stop-color="#000" stop-opacity="0.35"/><stop offset="0.3" stop-color="#000" stop-opacity="0"/><stop offset="0.7" stop-color="#000" stop-opacity="0"/><stop offset="1" stop-color="#000" stop-opacity="0.35"/></linearGradient>
</defs><g filter="url(#bl)">
<rect width="66" height="44" fill="url(#h1)"/>
<rect width="66" height="24" fill="url(#h2)"/>
<path d="M0 30.5 Q15 29.2 30 30 Q45 29 66 30 V44 H0 Z" fill="#0b0907"/>
<path d="M39.4 22 h1.6 v5.5 l-0.3 2.5 h-1 l-0.3 -2.5 Z" fill="#0d0c12"/>
</g></svg></div><svg class="abs" style="left:357.1px;top:306.2px" width="10.0" height="7.4" viewBox="0 0 10.0 7.4"><rect x="0" y="0" width="10.0" height="7.4" fill="#f1f1f5"/><rect x="0.6" y="0.6" width="8.8" height="6.2" fill="#5e5e8c"/><text x="5.0" y="5.5" text-anchor="middle" textLength="7.2" lengthAdjust="spacingAndGlyphs" font-family="Liberation Sans, sans-serif" font-weight="bold" font-size="5" fill="#fff">ICC</text></svg><svg class="abs" style="left:369.1px;top:306.2px" width="13.2" height="7.4" viewBox="0 0 13.2 7.4"><rect x="0" y="0" width="13.2" height="7.4" fill="#f1f1f5"/><rect x="0.6" y="0.6" width="12" height="6.2" fill="#5e5e8c"/><text x="6.6" y="5.5" text-anchor="middle" textLength="10" lengthAdjust="spacingAndGlyphs" font-family="Liberation Sans, sans-serif" font-weight="bold" font-size="5" fill="#fff">EXIF</text></svg><div class="lb ctr" style="left:303.95px;top:319.3px;width:84.65px;letter-spacing:-0.152px">8bc72ed7.jpg</div><div class="cell" style="left:389.60px;top:233.00px;width:85.65px;height:99.50px"></div><div class="fr" style="left:396.6px;top:251.9px"><svg viewBox="0 0 66 44" preserveAspectRatio="none">
<defs>
<linearGradient id="i1" x1="0" y1="0" x2="0" y2="1"><stop offset="0" stop-color="#47484d"/><stop offset="0.18" stop-color="#6c6a70"/><stop offset="0.3" stop-color="#999292"/><stop offset="0.6" stop-color="#aa9e9a"/></linearGradient>
<linearGradient id="i2" x1="0" y1="0" x2="1" y2="0"><stop offset="0" stop-color="#2f3e47"/><stop offset="0.6" stop-color="#3f4d56"/><stop offset="0.82" stop-color="#7c7c80"/><stop offset="1" stop-color="#6c6c71"/></linearGradient>
<linearGradient id="i3" x1="0" y1="0" x2="1" y2="0"><stop offset="0" stop-color="#8a7f86" stop-opacity="0.5"/><stop offset="0.5" stop-color="#fff" stop-opacity="0"/><stop offset="1" stop-color="#d8d4d0" stop-opacity="0.5"/></linearGradient>
</defs><g filter="url(#bl)">
<rect width="66" height="44" fill="url(#i1)"/>
<rect width="66" height="28" fill="url(#i3)"/>
<path d="M55 8 L66 1 V5 L57 10 Z" fill="#4a4a50"/>
<circle cx="9.5" cy="5.6" r="1" fill="#e8e8ec"/><circle cx="24.5" cy="5.6" r="1" fill="#e8e8ec"/><circle cx="39.5" cy="5.4" r="1" fill="#e8e8ec"/>
<rect x="18" y="14.8" width="12" height="10" fill="#5a5a54"/><rect x="19.8" y="16.6" width="8.4" height="6.4" fill="#a8aeb4"/>
<rect y="27" width="66" height="17" fill="url(#i2)"/>
<rect y="27" width="66" height="1" fill="#8e8a8c"/>
<path d="M12 28 V35 M17 28 V35 M22 28 V35 M27 28 V35 M32 28 V35 M37 28 V35 M42 28 V35 M47 28 V35 M52 28 V36" stroke="#8c989e" stroke-width="1.3" opacity="0.75"/>
<rect x="54" y="28" width="1.6" height="16" fill="#b8b8bc" opacity="0.7"/>
<path d="M18 36 H50 M22 41 H46" stroke="#2a3840" stroke-width="1" opacity="0.8"/>
</g></svg></div><svg class="abs" style="left:442.8px;top:306.2px" width="10.0" height="7.4" viewBox="0 0 10.0 7.4"><rect x="0" y="0" width="10.0" height="7.4" fill="#f1f1f5"/><rect x="0.6" y="0.6" width="8.8" height="6.2" fill="#5e5e8c"/><text x="5.0" y="5.5" text-anchor="middle" textLength="7.2" lengthAdjust="spacingAndGlyphs" font-family="Liberation Sans, sans-serif" font-weight="bold" font-size="5" fill="#fff">ICC</text></svg><svg class="abs" style="left:454.8px;top:306.2px" width="13.2" height="7.4" viewBox="0 0 13.2 7.4"><rect x="0" y="0" width="13.2" height="7.4" fill="#f1f1f5"/><rect x="0.6" y="0.6" width="12" height="6.2" fill="#5e5e8c"/><text x="6.6" y="5.5" text-anchor="middle" textLength="10" lengthAdjust="spacingAndGlyphs" font-family="Liberation Sans, sans-serif" font-weight="bold" font-size="5" fill="#fff">EXIF</text></svg><div class="lb" style="left:389.60px;top:319.3px;width:84.65px;letter-spacing:-0.624px">6TjIJK0uSJWtQUZu...</div><div class="cell" style="left:475.25px;top:233.00px;width:85.65px;height:99.50px"></div><div class="fr" style="left:482.2px;top:251.9px"><svg viewBox="0 0 66 44" preserveAspectRatio="none"><g filter="url(#bl)"><rect width="66" height="44" fill="#17202f"/><path d="M0 0 H14 L22 18 L26 30 L10 44 H0 Z" fill="#1d2838"/><path d="M66 0 H50 L44 20 L46 30 L60 44 H66 Z" fill="#1b2536"/><path d="M30 24 L38 24 L52 44 H20 Z" fill="#232a38"/><ellipse cx="35" cy="30" rx="11" ry="12" fill="#8a6a58" opacity="0.3"/><ellipse cx="15" cy="19" rx="7" ry="10" fill="#7a6458" opacity="0.28"/><ellipse cx="58" cy="16" rx="7" ry="9" fill="#6a5a50" opacity="0.25"/><circle cx="2" cy="3" r="1.2" fill="#e8d8c0" opacity="0.9"/><circle cx="2" cy="8" r="1.4" fill="#f0e0c8" opacity="0.9"/><circle cx="6" cy="9" r="1" fill="#d8c0a0" opacity="0.9"/><circle cx="11" cy="9.5" r="1.8" fill="#f4e6d0" opacity="0.9"/><circle cx="9" cy="14" r="1.4" fill="#c89a78" opacity="0.9"/><circle cx="13" cy="18" r="1.4" fill="#e0c0a0" opacity="0.9"/><circle cx="15" cy="16" r="2" fill="#b89a88" opacity="0.9"/><circle cx="17" cy="23" r="2.2" fill="#c8a898" opacity="0.9"/><circle cx="20" cy="27" r="1.6" fill="#a88878" opacity="0.9"/><circle cx="6" cy="27" r="1" fill="#c8c8d0" opacity="0.9"/><circle cx="10" cy="27" r="0.9" fill="#a8a8b8" opacity="0.9"/><circle cx="22" cy="11" r="1.2" fill="#56708a" opacity="0.9"/><circle cx="23" cy="6" r="1.4" fill="#3a5470" opacity="0.9"/><circle cx="28" cy="18" r="1.6" fill="#e8e0d8" opacity="0.9"/><circle cx="31" cy="19" r="1.2" fill="#d8c8b0" opacity="0.9"/><circle cx="36" cy="17" r="1.6" fill="#f0e8e0" opacity="0.9"/><circle cx="40" cy="19" r="1.4" fill="#d8d0c0" opacity="0.9"/><circle cx="43" cy="21" r="1" fill="#c0a890" opacity="0.9"/><circle cx="25" cy="21" r="1" fill="#e0d0c0" opacity="0.9"/><circle cx="33" cy="24" r="2.2" fill="#c89070" opacity="0.9"/><circle cx="35" cy="27" r="1.8" fill="#d8a080" opacity="0.9"/><circle cx="32" cy="30" r="1.4" fill="#e8c8a8" opacity="0.9"/><circle cx="37" cy="31" r="1.2" fill="#c88868" opacity="0.9"/><circle cx="40" cy="33" r="1.4" fill="#e0b898" opacity="0.9"/><circle cx="35" cy="35" r="1.4" fill="#d8b090" opacity="0.9"/><circle cx="30" cy="35" r="1.2" fill="#c0a088" opacity="0.9"/><circle cx="44" cy="35" r="1.2" fill="#e8d0b8" opacity="0.9"/><circle cx="48" cy="36" r="1.8" fill="#c85848" opacity="0.9"/><circle cx="52" cy="38" r="1.2" fill="#d87868" opacity="0.9"/><circle cx="36" cy="39" r="1.4" fill="#e8d8c8" opacity="0.9"/><circle cx="40" cy="40" r="1" fill="#d8c8b8" opacity="0.9"/><circle cx="24" cy="42" r="1" fill="#e0e0e8" opacity="0.9"/><circle cx="28" cy="42" r="1" fill="#d0d0d8" opacity="0.9"/><circle cx="46" cy="42" r="1.2" fill="#d8c0a8" opacity="0.9"/><circle cx="50" cy="42" r="1" fill="#c8b098" opacity="0.9"/><circle cx="53" cy="9" r="1.6" fill="#f4e8e0" opacity="0.9"/><circle cx="53" cy="12" r="1.6" fill="#f0d8c8" opacity="0.9"/><circle cx="53" cy="15" r="1.6" fill="#e8c0a8" opacity="0.9"/><circle cx="59" cy="7" r="1" fill="#e8dcc8" opacity="0.9"/><circle cx="62" cy="6" r="1" fill="#e8dcc8" opacity="0.9"/><circle cx="65" cy="5" r="1" fill="#e8dcc8" opacity="0.9"/><circle cx="61" cy="10" r="0.9" fill="#d0c0a8" opacity="0.9"/><circle cx="64" cy="9.5" r="0.9" fill="#d0c0a8" opacity="0.9"/><circle cx="56" cy="19" r="1.2" fill="#b89878" opacity="0.9"/><circle cx="60" cy="18" r="1.2" fill="#c8a888" opacity="0.9"/><circle cx="63" cy="19" r="1.8" fill="#e8d0b0" opacity="0.9"/><circle cx="57" cy="24" r="1" fill="#a88868" opacity="0.9"/><circle cx="60" cy="26" r="0.8" fill="#c0a080" opacity="0.9"/><circle cx="59" cy="2" r="0.9" fill="#c8c8d0" opacity="0.9"/><circle cx="45" cy="15" r="1" fill="#4a6078" opacity="0.9"/><circle cx="58" cy="33" r="0.9" fill="#8890a8" opacity="0.9"/></g></svg></div><svg class="abs" style="left:528.4px;top:306.2px" width="10.0" height="7.4" viewBox="0 0 10.0 7.4"><rect x="0" y="0" width="10.0" height="7.4" fill="#f1f1f5"/><rect x="0.6" y="0.6" width="8.8" height="6.2" fill="#5e5e8c"/><text x="5.0" y="5.5" text-anchor="middle" textLength="7.2" lengthAdjust="spacingAndGlyphs" font-family="Liberation Sans, sans-serif" font-weight="bold" font-size="5" fill="#fff">ICC</text></svg><svg class="abs" style="left:540.4px;top:306.2px" width="13.2" height="7.4" viewBox="0 0 13.2 7.4"><rect x="0" y="0" width="13.2" height="7.4" fill="#f1f1f5"/><rect x="0.6" y="0.6" width="12" height="6.2" fill="#5e5e8c"/><text x="6.6" y="5.5" text-anchor="middle" textLength="10" lengthAdjust="spacingAndGlyphs" font-family="Liberation Sans, sans-serif" font-weight="bold" font-size="5" fill="#fff">EXIF</text></svg><div class="lb ctr" style="left:475.25px;top:319.3px;width:84.65px;letter-spacing:-0.169px">6e609595.jpg</div><div class="cell" style="left:47.00px;top:332.50px;width:85.65px;height:99.50px"></div><div class="fr" style="left:54.0px;top:351.4px"><svg viewBox="0 0 66 44" preserveAspectRatio="none"><g filter="url(#bl)"><rect width="66" height="44" fill="#2d6fb2"/></g></svg></div><svg class="abs" style="left:100.2px;top:405.7px" width="10.0" height="7.4" viewBox="0 0 10.0 7.4"><rect x="0" y="0" width="10.0" height="7.4" fill="#f1f1f5"/><rect x="0.6" y="0.6" width="8.8" height="6.2" fill="#5e5e8c"/><text x="5.0" y="5.5" text-anchor="middle" textLength="7.2" lengthAdjust="spacingAndGlyphs" font-family="Liberation Sans, sans-serif" font-weight="bold" font-size="5" fill="#fff">ICC</text></svg><svg class="abs" style="left:112.2px;top:405.7px" width="13.2" height="7.4" viewBox="0 0 13.2 7.4"><rect x="0" y="0" width="13.2" height="7.4" fill="#f1f1f5"/><rect x="0.6" y="0.6" width="12" height="6.2" fill="#5e5e8c"/><text x="6.6" y="5.5" text-anchor="middle" textLength="10" lengthAdjust="spacingAndGlyphs" font-family="Liberation Sans, sans-serif" font-weight="bold" font-size="5" fill="#fff">EXIF</text></svg><div class="cell" style="left:132.65px;top:332.50px;width:85.65px;height:99.50px"></div><div class="fr" style="left:139.7px;top:351.4px"><svg viewBox="0 0 66 44" preserveAspectRatio="none"><g filter="url(#bl)"><rect width="66" height="44" fill="#c9c3ae"/><rect x="0" width="8" height="44" fill="#8a8a80"/></g></svg></div><svg class="abs" style="left:185.9px;top:405.7px" width="10.0" height="7.4" viewBox="0 0 10.0 7.4"><rect x="0" y="0" width="10.0" height="7.4" fill="#f1f1f5"/><rect x="0.6" y="0.6" width="8.8" height="6.2" fill="#5e5e8c"/><text x="5.0" y="5.5" text-anchor="middle" textLength="7.2" lengthAdjust="spacingAndGlyphs" font-family="Liberation Sans, sans-serif" font-weight="bold" font-size="5" fill="#fff">ICC</text></svg><svg class="abs" style="left:197.9px;top:405.7px" width="13.2" height="7.4" viewBox="0 0 13.2 7.4"><rect x="0" y="0" width="13.2" height="7.4" fill="#f1f1f5"/><rect x="0.6" y="0.6" width="12" height="6.2" fill="#5e5e8c"/><text x="6.6" y="5.5" text-anchor="middle" textLength="10" lengthAdjust="spacingAndGlyphs" font-family="Liberation Sans, sans-serif" font-weight="bold" font-size="5" fill="#fff">EXIF</text></svg><div class="cell" style="left:218.30px;top:332.50px;width:85.65px;height:99.50px"></div><div class="fr" style="left:225.3px;top:351.4px"><svg viewBox="0 0 66 44" preserveAspectRatio="none"><g filter="url(#bl)"><rect width="66" height="44" fill="#3a7ab8"/><rect x="12" width="14" height="44" fill="#dfe8f0"/><rect x="44" width="10" height="44" fill="#cfdde8"/></g></svg></div><svg class="abs" style="left:271.5px;top:405.7px" width="10.0" height="7.4" viewBox="0 0 10.0 7.4"><rect x="0" y="0" width="10.0" height="7.4" fill="#f1f1f5"/><rect x="0.6" y="0.6" width="8.8" height="6.2" fill="#5e5e8c"/><text x="5.0" y="5.5" text-anchor="middle" textLength="7.2" lengthAdjust="spacingAndGlyphs" font-family="Liberation Sans, sans-serif" font-weight="bold" font-size="5" fill="#fff">ICC</text></svg><svg class="abs" style="left:283.5px;top:405.7px" width="13.2" height="7.4" viewBox="0 0 13.2 7.4"><rect x="0" y="0" width="13.2" height="7.4" fill="#f1f1f5"/><rect x="0.6" y="0.6" width="12" height="6.2" fill="#5e5e8c"/><text x="6.6" y="5.5" text-anchor="middle" textLength="10" lengthAdjust="spacingAndGlyphs" font-family="Liberation Sans, sans-serif" font-weight="bold" font-size="5" fill="#fff">EXIF</text></svg>
</div>
<!-- scrollbar -->
<div style="left:644px;top:119px;width:9px;height:236px;background:#f7f7f7;border-left:1px solid #d9d9d9"></div>
<div style="left:644px;top:289px;width:9px;height:56px;background:#e4e4e4;border-left:1px solid #d0d0d0;border-top:1px solid #d0d0d0"></div>
<div style="left:644px;top:128px;width:9px;height:1px;background:#dadada"></div>
<div style="left:644px;top:345px;width:9px;height:1px;background:#cfcfcf"></div>
<svg style="left:645px;top:120px" width="8" height="6" viewBox="0 0 8 6"><path d="M1.5 4.2 L4 1.6 L6.5 4.2 Z" fill="#5a5e62"/></svg>
<svg style="left:645px;top:347px" width="8" height="6" viewBox="0 0 8 6"><path d="M1.4 1.8 L4 4.6 L6.6 1.8 Z" fill="#4c5054"/></svg>

<!-- buttons -->
<div class="btn" style="left:39.6px;top:366.2px;width:60px;padding-left:11px"><span style="letter-spacing:-0.256px">Add files...</span></div>
<svg style="left:45.2px;top:371.6px" width="7.2" height="7.2" viewBox="0 0 9 9"><path d="M3.2 0.6 H5.8 V3.2 H8.4 V5.8 H5.8 V8.4 H3.2 V5.8 H0.6 V3.2 H3.2 Z" fill="#9acb27" stroke="#5a8a12" stroke-width="0.8" stroke-linejoin="round"/></svg>
<div class="btn" style="left:103.6px;top:366.2px;width:55px"><span style="letter-spacing:-0.165px">Add folder...</span></div>
<div class="btn dis" style="left:545px;top:366.2px;width:55.4px;padding-left:9px"><span style="letter-spacing:-0.479px">Remove</span></div>
<div style="left:551.2px;top:373.8px;width:7px;height:2.4px;background:#b4b5b6;border-radius:1px"></div>
<div class="btn" style="left:604.6px;top:366.2px;width:55.8px"><span style="letter-spacing:-0.31px">Remove all</span></div>
<div style="left:273.5px;top:394.6px;width:239px;height:17px;border:1px solid #bdbfc1;border-radius:2px;background:#fefefe;line-height:15px;padding-left:1px;color:#9b9da0;white-space:nowrap"><span style="letter-spacing:-0.257px">Quick search</span></div>
<div class="btn dis" style="left:517px;top:394.6px;width:67px"><span style="letter-spacing:-0.179px">Remove filtered</span></div>
<div class="btn dis" style="left:589px;top:394.6px;width:77.6px"><span style="letter-spacing:-0.154px">Remove unfiltered</span></div>
<div class="btn" style="left:33px;top:416px;width:56.8px"><span style="letter-spacing:-0.112px">Hot folders...</span></div>

<!-- bottom bar -->
<div style="left:24.4px;top:445.6px;width:273.4px;height:21.2px;border:1.5px solid #d3d4d5;background:#f1f2f3"></div>
<svg style="left:28.6px;top:450.8px" width="12" height="10.4" viewBox="0 0 12 10.4"><defs><linearGradient id="fo" x1="0" y1="0" x2="0" y2="1"><stop offset="0" stop-color="#f3e087"/><stop offset="1" stop-color="#d6b548"/></linearGradient></defs><path d="M0.8 1.4 Q0.8 0.8 1.4 0.8 H4.4 L5.4 2.2 H10.4 Q11 2.2 11 2.8 V9 Q11 9.6 10.4 9.6 H1.4 Q0.8 9.6 0.8 9 Z" fill="url(#fo)" stroke="#a88c36" stroke-width="0.8"/><path d="M4 5.2 H6.4 V3.8 L9 6 L6.4 8.2 V6.8 H4 Z" fill="#86b81e"/></svg>
<div class="btn" style="left:47px;top:449px;width:98.2px;height:15.6px;line-height:14px;text-align:left;padding-left:2.3px;overflow:hidden;letter-spacing:-0.32px;background:linear-gradient(#fcfcfc,#f4f4f4);border-color:#cbcdcf">xnconvert_MTE_Non</div>
<div style="left:130.4px;top:450px;width:13.8px;height:13.6px;background:linear-gradient(#fbfbfb,#f5f5f5)"></div>
<svg style="left:132.6px;top:455px" width="7" height="5" viewBox="0 0 7 5"><path d="M0.9 1 L3.5 3.8 L6.1 1 Z" fill="#63676b"/></svg>
<svg style="left:153px;top:451.4px" width="10" height="10" viewBox="0 0 10 10"><path d="M1 0.6 H9 Q9.5 0.6 9.5 1.1 V9 Q9.5 9.5 9 9.5 H1 Q0.5 9.5 0.5 9 V1.1 Q0.5 0.6 1 0.6 Z" fill="#7378cc" stroke="#5257b0" stroke-width="0.6"/><rect x="2.3" y="0.8" width="5.4" height="3.1" fill="#f2f3fc"/><rect x="1.8" y="5.2" width="6.4" height="4.1" fill="#f6f6fd"/><rect x="5.7" y="1.1" width="1.3" height="2.3" fill="#4b50a8"/></svg>
<svg style="left:174px;top:451.4px" width="10.4" height="10" viewBox="0 0 10.4 10"><path d="M1.4 2.8 L2.9 1.2 L5.2 3.5 L7.5 1.2 L9 2.8 L6.8 5 L9 7.2 L7.5 8.8 L5.2 6.5 L2.9 8.8 L1.4 7.2 L3.6 5 Z" fill="#e0484a" stroke="#c63336" stroke-width="0.6" stroke-linejoin="round"/></svg>
<div class="btn" style="left:191.8px;top:449px;width:104px;height:15.6px;line-height:14px;padding-left:11px"><span style="letter-spacing:-0.134px">Export for NConvert...</span></div>
<svg style="left:195.6px;top:450.4px" width="11" height="12" viewBox="0 0 11 12"><rect x="0.8" y="2.6" width="7.6" height="8.6" rx="0.9" fill="#f6f6f6" stroke="#6a6e72" stroke-width="0.9"/><path d="M3.6 7.4 L3.6 3.4 L4.9 4.7 L8.4 1 L10.4 3 L6.8 6.5 L8 7.6 Z" fill="#86c52a" stroke="#5a9414" stroke-width="0.5" stroke-linejoin="round"/></svg>
<!-- social -->
<svg style="left:412px;top:450.4px" width="11" height="11.2" viewBox="0 0 11 11.2"><rect width="11" height="11.2" fill="#f7f8fa"/><rect x="0.7" y="0.7" width="9.5" height="9.8" fill="#3a5496"/><path d="M7.1 10.5 V6.9 H8.5 L8.7 5.3 H7.1 V4.5 Q7.1 3.8 7.9 3.8 H8.8 V2.4 Q8.3 2.3 7.5 2.3 Q5.4 2.3 5.4 4.3 V5.3 H4.1 V6.9 H5.4 V10.5 Z" fill="#fff"/></svg>
<svg style="left:435px;top:450.2px" width="11.2" height="11.6" viewBox="0 0 11.4 11.6"><rect x="0.4" y="0.4" width="10.6" height="10.8" rx="1.6" fill="#f7f7f8" stroke="#d6d1cc" stroke-width="0.8"/><path d="M2.3 3.2 Q3.8 5 5.6 5 Q5.5 3.2 7.1 3.1 Q8 3.1 8.4 3.6 L9.5 3.3 L9 4.2 L9.6 4.3 L8.9 4.9 Q9 8.6 5 8.9 Q3.2 8.9 2.1 8.1 Q3.5 8.2 4.3 7.5 Q3.2 7.3 3 6.5 L3.7 6.4 Q2.6 5.9 2.6 4.9 L3.2 5.1 Q2.1 4.2 2.3 3.2 Z" fill="#2b8ccc"/></svg>
<div class="btn" style="left:560.4px;top:448.2px;width:55.4px;height:16.4px;line-height:14.4px;padding-left:10px"><span style="letter-spacing:-0.206px"><u>C</u>onvert</span></div>
<svg style="left:565.4px;top:450.4px" width="12" height="11" viewBox="0 0 12 11"><defs><linearGradient id="cv" x1="0" y1="0" x2="1" y2="0"><stop offset="0" stop-color="#6fae3a"/><stop offset="0.35" stop-color="#a9c63c"/><stop offset="0.6" stop-color="#e9c43a"/><stop offset="0.85" stop-color="#e8842c"/><stop offset="1" stop-color="#d95a2c"/></linearGradient></defs><rect x="0.8" y="0.5" width="9.4" height="7.6" fill="#b9b4c6" stroke="#8f8a9a" stroke-width="0.6"/><rect x="1.4" y="2.6" width="10" height="7.6" fill="url(#cv)" stroke="#6f6a52" stroke-width="0.6"/><path d="M1.8 9.8 L4.6 6.8 L6.4 8.4 L8 7 L11 9.8 Z" fill="#5d8f2a" opacity="0.7"/></svg>
<div class="btn" style="left:620.4px;top:448.2px;width:55.4px;height:16.4px;line-height:14.4px"><span style="letter-spacing:-0.53px">Close</span></div>
</body></html>
